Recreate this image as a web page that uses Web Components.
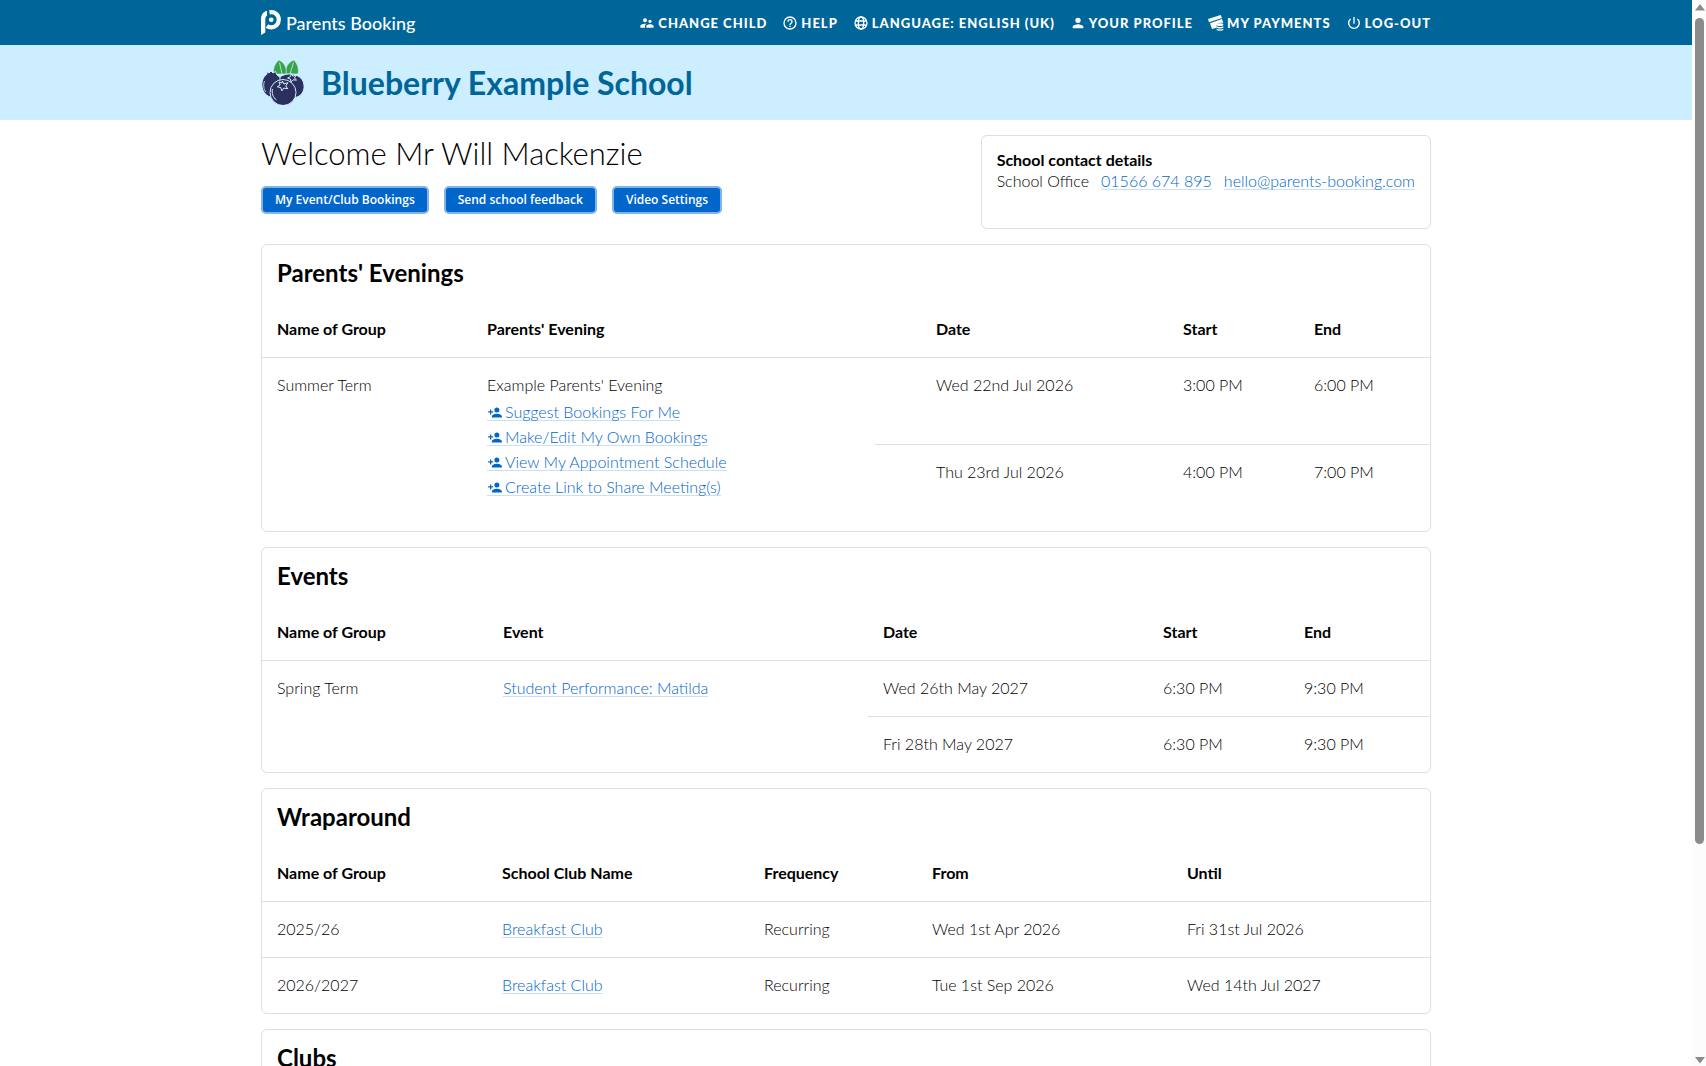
<!DOCTYPE html>
<html lang="en">
<head>
  <meta charset="utf-8">
  <meta name="viewport" content="width=device-width, initial-scale=1">
  <title>Parents Booking</title>
  <style>
    body {
      margin: 0;
      font: 300 16px/24px Lato, "Open Sans", sans-serif;
      color: #000;
      background: #fff;
      --brand: #006699;
      --band: #cceeff;
      --link: #0066cc;
      --line: #dfdfdf;
      --page: 1170px;
    }
  </style>
</head>
<body>
  <app-shell>
    <top-bar></top-bar>
    <school-banner>Blueberry Example School</school-banner>
    <page-main>
      <page-intro name="Mr Will Mackenzie"></page-intro>
      <info-card heading="Parents' Evenings"><booking-table source="evenings"></booking-table></info-card>
      <info-card heading="Events"><booking-table source="events"></booking-table></info-card>
      <info-card heading="Wraparound"><booking-table source="wraparound"></booking-table></info-card>
      <info-card heading="Clubs"></info-card>
    </page-main>
  </app-shell>

  <script>
    const ICONS = {
      children: '<path d="M16.5 12a2.5 2.5 0 1 0 0-5 2.5 2.5 0 0 0 0 5zM9 11a3 3 0 1 0 0-6 3 3 0 0 0 0 6zm7.5 3c-1.83 0-5.5.92-5.5 2.75V19h11v-2.25c0-1.83-3.67-2.75-5.5-2.75zM9 13c-2.33 0-7 1.17-7 3.5V19h7v-2.25c0-.85.33-2.34 2.37-3.47C10.5 13.1 9.66 13 9 13z"/>',
      help: '<path d="M11 18h2v-2h-2v2zm1-16a10 10 0 1 0 0 20 10 10 0 0 0 0-20zm0 18a8 8 0 1 1 0-16 8 8 0 0 1 0 16zm0-14a4 4 0 0 0-4 4h2a2 2 0 1 1 4 0c0 2-3 1.75-3 5h2c0-2.25 3-2.5 3-5a4 4 0 0 0-4-4z"/>',
      globe: '<g fill="none" stroke="currentColor" stroke-width="2"><circle cx="12" cy="12" r="9"/><ellipse cx="12" cy="12" rx="4" ry="9"/><path d="M3.5 9h17M3.5 15h17"/></g>',
      person: '<path d="M12 12a4 4 0 1 0 0-8 4 4 0 0 0 0 8zm0 2c-2.67 0-8 1.34-8 4v2h16v-2c0-2.66-5.33-4-8-4z"/>',
      payments: '<path d="M0 6 19 0l2 4.500L1.500 11z"/><path d="M3 12.500 21 6l2 6c-4-1-9 0-10 3v4L6 21z"/><ellipse cx="18" cy="14.500" rx="5" ry="2"/><path d="M13 16.800c2 1.600 8 1.600 10 0v2.200c-2 1.600-8 1.600-10 0zM13 20.500c2 1.600 8 1.600 10 0v2c-2 1.600-8 1.600-10 0z"/>',
      power: '<path d="M13 3h-2v10h2V3zm4.830 2.170-1.420 1.420A6.920 6.920 0 0 1 19 12a7 7 0 1 1-11.420-5.420L6.170 5.170A8.930 8.930 0 0 0 3 12a9 9 0 0 0 18 0c0-2.740-1.230-5.180-3.170-6.830z"/>',
      addPerson: '<path d="M15 12a4 4 0 1 0 0-8 4 4 0 0 0 0 8zm-9-2V7H4v3H1v2h3v3h2v-3h3v-2H6zm9 4c-2.670 0-8 1.340-8 4v2h16v-2c0-2.660-5.330-4-8-4z"/>'
    };

    class AppIcon extends HTMLElement {
      constructor() {
        super();
        this.attachShadow({ mode: "open" });
      }
      connectedCallback() {
        this.shadowRoot.innerHTML = `
          <style>
            :host { display: inline-block; width: 16px; height: 16px; }
            svg { display: block; width: 100%; height: 100%; fill: currentColor; }
          </style>
          <svg viewBox="0 0 24 24" aria-hidden="true">${ICONS[this.getAttribute("name")]}</svg>
        `;
      }
    }

    // Scrolling page on the left, slim scroll track on the right
    class AppShell extends HTMLElement {
      constructor() {
        super();
        this.attachShadow({ mode: "open" });
      }
      connectedCallback() {
        this.shadowRoot.innerHTML = `
          <style>
            :host { display: flex; height: 100vh; overflow: hidden; }
            .page { flex: 1; min-width: 0; overflow-y: auto; scrollbar-width: none; }
            .track {
              width: 14px;
              box-sizing: border-box;
              padding: 4px 2px 2px 3px;
              display: flex;
              flex-direction: column;
              align-items: center;
              gap: 7px;
              background: #fcfcfc;
            }
            .rail { flex: 1; width: 9px; }
            .thumb { height: 80%; border-radius: 5px; background: #8b8b8b; }
            svg { width: 10px; height: 7px; fill: #8b8b8b; }
          </style>
          <div class="page"><slot></slot></div>
          <div class="track" aria-hidden="true">
            <svg viewBox="0 0 10 7"><path d="M5 0 10 6.500H0z"/></svg>
            <div class="rail"><div class="thumb"></div></div>
            <svg viewBox="0 0 10 7"><path d="M0 0h10L5 6.500z"/></svg>
          </div>
        `;
      }
    }

    class TopBar extends HTMLElement {
      constructor() {
        super();
        this.attachShadow({ mode: "open" });
      }
      connectedCallback() {
        const links = [
          ["children", "Change child"],
          ["help", "Help"],
          ["globe", "Language: English (UK)"],
          ["person", "Your profile"],
          ["payments", "My payments"],
          ["power", "Log-out"]
        ];
        this.shadowRoot.innerHTML = `
          <style>
            :host { display: block; background: var(--brand); color: #fff; }
            .inner {
              max-width: var(--page);
              height: 45px;
              margin: 0 auto;
              display: flex;
              align-items: center;
              justify-content: space-between;
            }
            a { color: inherit; text-decoration: none; display: flex; align-items: center; }
            .brand { gap: 5px; font-size: 18px; font-weight: 500; }
            .brand svg { width: 20px; height: 25px; }
            nav { display: flex; gap: 15px; }
            nav a {
              gap: 3px;
              font-size: 13px;
              font-weight: 900;
              letter-spacing: 1px;
              text-transform: uppercase;
              white-space: nowrap;
            }
          </style>
          <header class="inner">
            <a class="brand" href="#">
              <svg viewBox="0 0 20 25" aria-hidden="true">
                <path fill="#fff" d="M0 25V9.500C0 5 2 1.800 6 .8v4.600c-1.300 1-1.700 2.400-1.700 4.100v13z"/>
                <path fill="none" stroke="#fff" stroke-width="4.200" d="M8.500 2.400c5.500-1 9.300 2.500 9.300 7.300 0 4.600-3.700 7.600-7.500 7.600-2 0-3-.3-4.300-1.300"/>
                <circle cx="10.200" cy="9.700" r="2.300" fill="#fff"/>
              </svg>
              <span>Parents Booking</span>
            </a>
            <nav>
              ${links.map(([icon, text]) => `<a href="#"><app-icon name="${icon}"></app-icon><span>${text}</span></a>`).join("")}
            </nav>
          </header>
        `;
      }
    }

    class SchoolBanner extends HTMLElement {
      constructor() {
        super();
        this.attachShadow({ mode: "open" });
      }
      connectedCallback() {
        this.shadowRoot.innerHTML = `
          <style>
            :host { display: block; background: var(--band); color: var(--brand); }
            .inner {
              max-width: var(--page);
              height: 75px;
              margin: 0 auto;
              display: flex;
              align-items: center;
              gap: 16px;
            }
            svg { width: 44px; height: 45px; }
            h1 { margin: 0; font-size: 32px; line-height: 40px; font-weight: 700; }
          </style>
          <div class="inner">
            <svg viewBox="-1 0 44 45" aria-hidden="true">
              <g fill="#37a34a" stroke="#cceeff" stroke-width=".6">
                <path d="M24 14C23 7 26 2.500 32 0c4 4.500 5 9.500 4 14z"/>
                <path d="M12 14c-1.500-5 .5-10 5-14 5.500 3 8 7.500 7 14z"/>
              </g>
              <path fill="none" stroke="#cceeff" stroke-width=".8" d="M17.500 2.500 20 14M31.500 2.500 28 14"/>
              <g fill="#2b2f5e" stroke="#cceeff">
                <path d="M5 14l-.5-2.500L7 13l2-2 2 2 2.500-1.500L15 15l8 6-8 16.500c-3 .5-5 .5-7-.5C-2 33-2.500 19 5 14z"/>
                <path d="M18 17c8-6 23-3 24 8 .8 7-4 12-9 12.500L18 22z"/>
                <circle cx="21" cy="32.500" r="13"/>
              </g>
              <g fill="none" stroke="#d6f0fa" stroke-width="1">
                <path d="M20.500 21l1.300 3 4-1.300-2 3.300 2 2.700-4-.6-2 2.700-1-3.200-3.500-.8 2.800-1.900-1.100-3 3 1z"/>
                <path d="M29.500 13.500l1.300 2.600 3.500-1.100-1.800 3 2 2.200-3.500-.4-2 2.200-.6-3-2.800-.9 2.800-1.500z"/>
                <path d="M10.500 29c-1 4 .5 8.500 4 11"/>
                <path d="M2.500 21c-1.500 4-.8 8.500 1.500 11" stroke-width=".8"/>
              </g>
            </svg>
            <h1><slot></slot></h1>
          </div>
        `;
      }
    }

    class PageMain extends HTMLElement {
      constructor() {
        super();
        this.attachShadow({ mode: "open" });
      }
      connectedCallback() {
        this.shadowRoot.innerHTML = `
          <style>
            :host { display: block; padding: 15px 0; }
            main {
              max-width: var(--page);
              margin: 0 auto;
              display: flex;
              flex-direction: column;
              gap: 15px;
            }
          </style>
          <main><slot></slot></main>
        `;
      }
    }

    class PageIntro extends HTMLElement {
      constructor() {
        super();
        this.attachShadow({ mode: "open" });
      }
      connectedCallback() {
        this.shadowRoot.innerHTML = `
          <style>
            :host { display: flex; justify-content: space-between; gap: 15px; }
            h2 { margin: 0 0 15px; font-size: 31px; line-height: 36px; font-weight: 300; color: #000; }
            .buttons { display: flex; flex-wrap: wrap; gap: 15px; }
            button {
              height: 28px;
              padding: 0 12px;
              border: 2px solid #80b3e6;
              border-radius: 5px;
              background: var(--link);
              color: #fff;
              font: 600 12px/16px "Open Sans", sans-serif;
            }
            .contact {
              box-sizing: border-box;
              min-height: 94px;
              padding: 13px 15px;
              border: 1px solid var(--line);
              border-radius: 6px;
              line-height: 22px;
            }
            h3 { margin: 0; font-size: 16px; font-weight: 700; color: #000; }
            .row { display: flex; align-items: baseline; gap: 12px; line-height: 20px; }
            a { color: var(--link); text-decoration: none; line-height: 17px; border-bottom: 1px solid #cce0f5; }
          </style>
          <div>
            <h2>Welcome ${this.getAttribute("name")}</h2>
            <div class="buttons">
              <button type="button">My Event/Club Bookings</button>
              <button type="button">Send school feedback</button>
              <button type="button">Video Settings</button>
            </div>
          </div>
          <section class="contact">
            <h3>School contact details</h3>
            <div class="row">
              <span>School Office</span>
              <a href="tel:01566674895">01566 674 895</a>
              <a href="mailto:hello@parents-booking.com">hello@parents-booking.com</a>
            </div>
          </section>
        `;
      }
    }

    class InfoCard extends HTMLElement {
      constructor() {
        super();
        this.attachShadow({ mode: "open" });
      }
      connectedCallback() {
        this.shadowRoot.innerHTML = `
          <style>
            :host { display: block; border: 1px solid var(--line); border-radius: 6px; }
            h2 {
              margin: 0;
              padding: 13px 15px;
              font-size: 24px;
              line-height: 30px;
              font-weight: 700;
              color: #000;
            }
          </style>
          <h2>${this.getAttribute("heading")}</h2>
          <slot></slot>
        `;
      }
    }

    const link = text => `<a href="#">${text}</a>`;
    const action = text => `<li><a href="#"><app-icon name="addPerson"></app-icon>${text}</a></li>`;

    // cols: [heading, width]; a cell is text or { html, span }
    const TABLES = {
      evenings: {
        cols: [["Name of Group", 210], ["Parents' Evening", 403], ["Date", 293], ["Start", 131], ["End", 131]],
        rows: [
          [
            { html: "Summer Term", span: 2 },
            {
              html: `Example Parents' Evening<ul>${[
                "Suggest Bookings For Me",
                "Make/Edit My Own Bookings",
                "View My Appointment Schedule",
                "Create Link to Share Meeting(s)"
              ].map(action).join("")}</ul>`,
              span: 2
            },
            "Wed 22nd Jul 2026", "3:00 PM", "6:00 PM"
          ],
          ["Thu 23rd Jul 2026", "4:00 PM", "7:00 PM"]
        ]
      },
      events: {
        cols: [["Name of Group", 226], ["Event", 380], ["Date", 280], ["Start", 141], ["End", 141]],
        rows: [
          [
            { html: "Spring Term", span: 2 },
            { html: link("Student Performance: Matilda"), span: 2 },
            "Wed 26th May 2027", "6:30 PM", "9:30 PM"
          ],
          ["Fri 28th May 2027", "6:30 PM", "9:30 PM"]
        ]
      },
      wraparound: {
        cols: [["Name of Group", 225], ["School Club Name", 262], ["Frequency", 168], ["From", 255], ["Until", 258]],
        rows: [
          ["2025/26", { html: link("Breakfast Club") }, "Recurring", "Wed 1st Apr 2026", "Fri 31st Jul 2026"],
          ["2026/2027", { html: link("Breakfast Club") }, "Recurring", "Tue 1st Sep 2026", "Wed 14th Jul 2027"]
        ]
      }
    };

    class BookingTable extends HTMLElement {
      constructor() {
        super();
        this.attachShadow({ mode: "open" });
      }
      connectedCallback() {
        const { cols, rows } = TABLES[this.getAttribute("source")];
        this.shadowRoot.innerHTML = `
          <style>
            :host { display: block; }
            table { width: 100%; table-layout: fixed; border-collapse: separate; border-spacing: 0; }
            th, td { padding: 16px 15px; text-align: left; vertical-align: top; }
            th { font-weight: 700; color: #000; }
            td { border-top: 1px solid var(--line); padding-top: 15px; }
            ul { margin: 2px 0 0; padding: 0; list-style: none; }
            li { line-height: 25px; }
            a {
              display: inline-block;
              color: var(--link);
              text-decoration: none;
              line-height: 17px;
              border-bottom: 1px solid #cce0f5;
            }
            app-icon { margin-right: 2px; vertical-align: -2px; height: 15px; }
            /* two-day evenings: tall rows, dates set in from the divider */
            :host([source="evenings"]) tbody tr { height: 87px; }
            :host([source="evenings"]) .date { padding-left: 61px; }
          </style>
          <table>
            <colgroup>${cols.map(([, width]) => `<col style="width: ${width}px">`).join("")}</colgroup>
            <thead>
              <tr>${cols.map(([text]) => `<th scope="col" class="${text.toLowerCase().split(" ")[0]}">${text}</th>`).join("")}</tr>
            </thead>
            <tbody>${rows.map(row => this.renderRow(row, cols)).join("")}</tbody>
          </table>
        `;
      }
      renderRow(row, cols) {
        // rows under a spanning cell are shorter, so columns count from the right
        const offset = cols.length - row.length;
        return `<tr>${row.map((cell, i) => {
          const name = cols[i + offset][0].toLowerCase().split(" ")[0];
          return `<td class="${name}" rowspan="${cell.span || 1}">${cell.html || cell}</td>`;
        }).join("")}</tr>`;
      }
    }

    customElements.define("app-icon", AppIcon);
    customElements.define("app-shell", AppShell);
    customElements.define("top-bar", TopBar);
    customElements.define("school-banner", SchoolBanner);
    customElements.define("page-main", PageMain);
    customElements.define("page-intro", PageIntro);
    customElements.define("info-card", InfoCard);
    customElements.define("booking-table", BookingTable);
  </script>
</body>
</html>
